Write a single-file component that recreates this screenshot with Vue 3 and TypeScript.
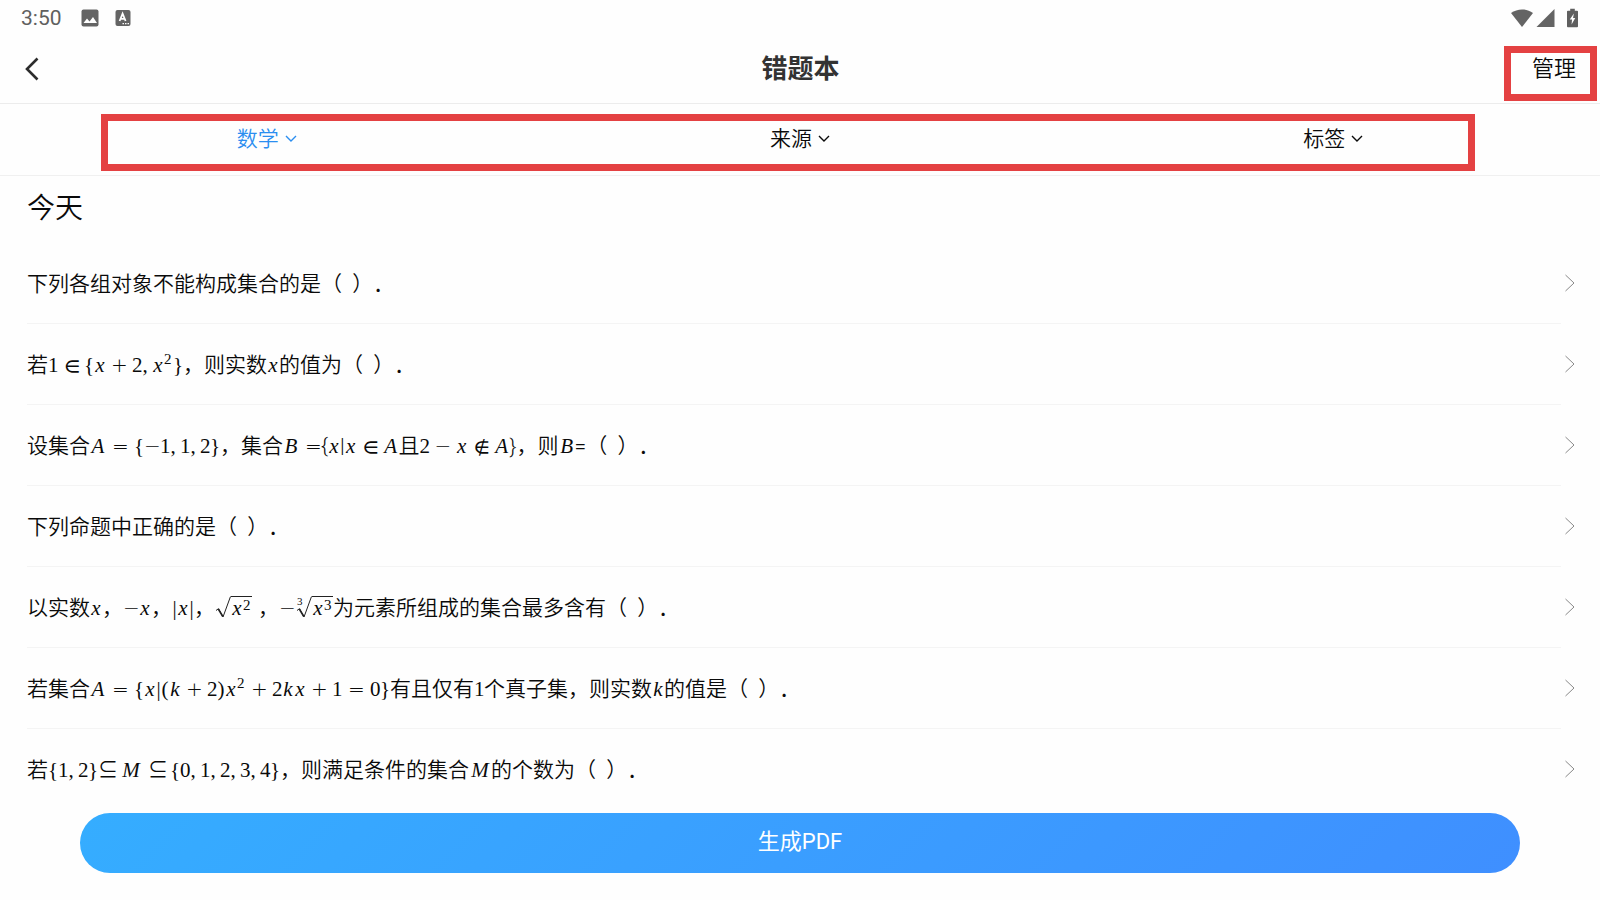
<script setup lang="ts">
type Kind = 'text' | 'var' | 'num' | 'open' | 'paren' | 'bar' | 'rel' | 'set' | 'bin' | 'neg' | 'comma' | 'sup' | 'sqrt' | 'cbrt' | 'gap'
interface Token { k: Kind; v: string }

const kinds: Record<string, Kind> = {
  '∈': 'set', '∉': 'set', '⊆': 'rel', '=': 'rel', '+': 'bin', '-': 'bin', '~': 'neg',
  ',': 'comma', '{': 'open', '}': 'open', '(': 'paren', ')': 'paren', '|': 'bar',
}

/** Splits a formula into tokens; ^n is a superscript, ~ a unary minus. */
function math(src: string): Token[] {
  const out: Token[] = []
  for (let i = 0; i < src.length; i++) {
    const c = src[i]
    if (c === '^') out.push({ k: 'sup', v: src[++i] })
    else if (kinds[c]) out.push({ k: kinds[c], v: c === '-' || c === '~' ? '−' : c })
    else out.push({ k: /[0-9]/.test(c) ? 'num' : 'var', v: c })
  }
  return out
}
const text = (v: string): Token[] => [{ k: 'text', v }]
const one = (k: Kind, v: string): Token[] => [{ k, v }]
const blank = '（  ）．'

const questions: Token[][] = [
  text('下列各组对象不能构成集合的是' + blank),
  [...text('若'), ...math('1∈{x+2,x^2}'), ...text('，则实数'), ...math('x'), ...text('的值为' + blank)],
  [...text('设集合'), ...math('A={~1,1,2}'), ...text('，集合'), ...math('B'), ...one('gap', ''), ...one('neg', '='),
    ...text('{'), ...math('x'), ...text('|'), ...math('x∈A'), ...text('且'), ...math('2-x∉A'), ...text('}，则'),
    ...math('B'), ...text('=' + blank)],
  text('下列命题中正确的是' + blank),
  [...text('以实数'), ...math('x'), ...text('，'), ...math('~x'), ...text('，'), ...math('|x|'), ...text('，'),
    ...one('sqrt', '2'), ...one('gap', ''), ...text('，'), ...math('~'), ...one('cbrt', '3'),
    ...text('为元素所组成的集合最多含有' + blank)],
  [...text('若集合'), ...math('A={x|(k+2)x^2+2kx+1=0}'), ...text('有且仅有'), ...math('1'),
    ...text('个真子集，则实数'), ...math('k'), ...text('的值是' + blank)],
  [...text('若'), ...math('{1,2}'), ...one('neg', '⊆'), ...one('gap', ''), ...math('M⊆{0,1,2,3,4}'),
    ...text('，则满足条件的集合'), ...math('M'), ...text('的个数为' + blank)],
]
const filters = [
  { name: '数学', active: true },
  { name: '来源', active: false },
  { name: '标签', active: false },
]
</script>

<template>
  <div class="page" lang="zh-CN">
    <div class="status">
      <span class="clock">3:50</span>
      <svg class="pic" width="18" height="18" viewBox="0 0 18 18"><rect x="0.5" y="0.5" width="17" height="17" rx="2" fill="#646464" /><path d="M2.5 14 6 9.500l2.500 3L12 8l4 6z" fill="#fefefe" /></svg>
      <svg class="lang" width="16" height="18" viewBox="0 0 16 18"><rect x="0.5" y="1" width="15" height="16" rx="2" fill="#646464" /><path d="M4.600 12 7.600 4.600 10.600 12M5.600 9.800h4" fill="none" stroke="#fefefe" stroke-width="1.800" /><path d="M7.500 14.600h7" stroke="#fefefe" stroke-width="1.300" stroke-dasharray="1.5 1" /></svg>
      <span class="spring"></span>
      <svg width="24" height="20" viewBox="0 0 24 20"><path d="M1 5C7.500 .200 16.500 .200 23 5L12 19z" fill="#646464" /></svg>
      <svg class="cell" width="19" height="20" viewBox="0 0 19 20"><path d="M18.500 1v18H.500z" fill="#646464" /></svg>
      <svg class="battery" width="11" height="20" viewBox="0 0 12 20"><path d="M3.500 0h5v2H11q1 0 1 1v16q0 1-1 1H1q-1 0-1-1V3q0-1 1-1h2.500z" fill="#5f5f5f" /><path d="M7.500 5 3 11.500h2.500L5 17l4-7H6.600z" fill="#fefefe" /></svg>
    </div>

    <header class="header">
      <button class="back" type="button" aria-label="返回">
        <svg width="14" height="24" viewBox="0 0 14 24"><path d="M12.500 1.500 2 12l10.500 10.500" fill="none" stroke="#2c2c2c" stroke-width="2.600" /></svg>
      </button>
      <h1>错题本</h1>
      <button class="manage" type="button">管理</button>
      <span class="mark mark-manage"></span>
    </header>

    <nav class="filters">
      <button v-for="f in filters" :key="f.name" type="button" class="filter" :class="{ active: f.active }">
        {{ f.name }}
        <svg width="12" height="8" viewBox="0 0 12 8"><path d="M1 1l5 5 5-5" fill="none" stroke="currentColor" stroke-width="1.400" /></svg>
      </button>
      <span class="mark mark-filters"></span>
    </nav>

    <main class="list">
      <h2>今天</h2>
      <a v-for="(q, i) in questions" :key="i" class="row" href="#">
        <span class="question"><template v-for="(t, j) in q" :key="j"><span v-if="t.k === 'sqrt' || t.k === 'cbrt'" class="root"><sup v-if="t.k === 'cbrt'" class="degree">3</sup><svg class="radical" width="16" height="22" viewBox="0 0 16 22"><path d="M1 14.500l2.500-1.800L8 21 15.500.500" fill="none" stroke="#222" stroke-width="1" /><path d="M3.300 13 7.800 20.500" stroke="#222" stroke-width="1.600" /></svg><span class="radicand"><span class="tok var">x</span><sup class="sup">{{ t.v }}</sup></span></span><sup v-else-if="t.k === 'sup'" class="sup">{{ t.v }}</sup><span v-else-if="t.k === 'text'">{{ t.v }}</span><span v-else class="tok" :class="[t.k, { wide: 'AB'.includes(t.v) && t.k === 'var', widest: t.v === 'M' }]">{{ t.v }}</span></template></span>
        <svg class="go" width="10" height="18" viewBox="0 0 10 18"><path d="M.500 1 9 9 .500 17" fill="none" stroke="#888" stroke-width="1" /></svg>
      </a>
    </main>

    <footer class="footer">
      <button type="button" class="generate">生成PDF</button>
    </footer>
  </div>
</template>

<style>
body { margin: 0; background: #fefefe; }
</style>

<style scoped>
.page {
  min-height: 100vh;
  display: flex;
  flex-direction: column;
  background: #fefefe;
  color: #0a0a0a;
  font-family: Roboto, "Noto Sans CJK SC", sans-serif;
  font-weight: 350;
  text-spacing-trim: space-all;
}
button {
  border: 0;
  padding: 0;
  background: none;
  color: inherit;
  font-family: inherit;
  font-weight: inherit;
  cursor: pointer;
}
svg { display: block; flex: none; }

.status {
  display: flex;
  align-items: center;
  height: 36px;
  padding: 0 22px 0 21px;
}
.clock {
  font: 400 21px/36px Roboto, sans-serif;
  color: #606060;
}
.pic { margin-left: 19px; }
.lang { margin-left: 16px; }
.spring { flex: 1; }
.cell { margin-left: 2px; }
.battery { margin-left: 12px; }

.header {
  position: relative;
  display: grid;
  grid-template-columns: 1fr auto 1fr;
  align-items: center;
  height: 66px;
  padding: 0 24px 1px 25px;
  border-bottom: 1px solid #ececec;
}
.back { justify-self: start; }
h1 {
  margin: 0;
  font-size: 26px;
  font-weight: 700;
  line-height: 40px;
  color: #333;
}
.manage {
  justify-self: end;
  font-size: 22px;
  line-height: 40px;
}
.mark {
  position: absolute;
  border: 7px solid #e44142;
  pointer-events: none;
}
.mark-manage { top: 10px; right: 3px; bottom: 2px; width: 79px; }
.mark-filters { top: 10px; right: 125px; bottom: 4px; left: 101px; }

.filters {
  position: relative;
  display: grid;
  grid-template-columns: repeat(3, 1fr);
  height: 69px;
  padding-bottom: 2px;
  border-bottom: 1px solid #f0f0f0;
}
.filter {
  display: flex;
  justify-content: center;
  align-items: center;
  gap: 6px;
  font-size: 21px;
  line-height: 30px;
}
.active { color: #2b8ef0; }

.list { flex: 1; }
h2 {
  height: 67px;
  margin: 0;
  padding-left: 27px;
  font-size: 28px;
  font-weight: 350;
  line-height: 66px;
}
.row {
  display: flex;
  align-items: center;
  height: 80px;
  margin: 0 25px 0 27px;
  border-bottom: 1px solid transparent;
  border-image: linear-gradient(to right, #f4f4f4 99%, transparent 99%) 1;
  color: inherit;
  text-decoration: none;
}
.row:last-child { border-image: none; }
.question {
  flex: 1;
  padding-top: 2px;
  font-size: 21px;
  line-height: 32px;
  white-space: pre;
}

.tok {
  display: inline-block;
  font-family: "Liberation Serif", serif;
  font-weight: 400;
  line-height: 22px;
  text-align: center;
}
.var { width: 12px; font-style: italic; }
.wide { width: 16px; }
.widest { width: 22px; }
.num, .open { width: 10px; }
.paren { width: 8px; }
.bar { width: 5px; }
.comma { width: 6px; margin-right: 4px; }
.rel, .set, .bin, .neg {
  width: 16px;
  font-family: "DejaVu Sans", sans-serif;
  font-size: 20px;
  font-weight: 200;
}
.rel { margin: 0 6px; }
.set {
  width: 14px;
  margin: 0 6px;
  font-family: "DejaVu Math TeX Gyre", "DejaVu Sans", sans-serif;
}
.bin { margin: 0 5px; }
.gap { width: 6px; }
.sup {
  display: inline-block;
  width: 9px;
  font: 400 15px/16px "Liberation Serif", serif;
  vertical-align: 8px;
}
.root { display: inline-block; }
.radical {
  display: inline-block;
  vertical-align: -3px;
}
.radicand {
  display: inline-block;
  border-top: 1px solid #222;
  font-family: "Liberation Serif", serif;
  line-height: 22px;
}
.radicand .sup { vertical-align: 5px; }
.degree {
  display: inline-block;
  width: 6px;
  margin: 0 -7px 0 2px;
  font: 400 11px/11px "Liberation Serif", serif;
  vertical-align: 10px;
}

.footer { padding: 3px 80px 27px; }
.generate {
  width: 100%;
  height: 60px;
  padding-bottom: 8px;
  border-radius: 30px;
  background: linear-gradient(135deg, #35adff, #3f8fff);
  color: #fff;
  font-size: 22px;
  font-weight: 400;
}
</style>
